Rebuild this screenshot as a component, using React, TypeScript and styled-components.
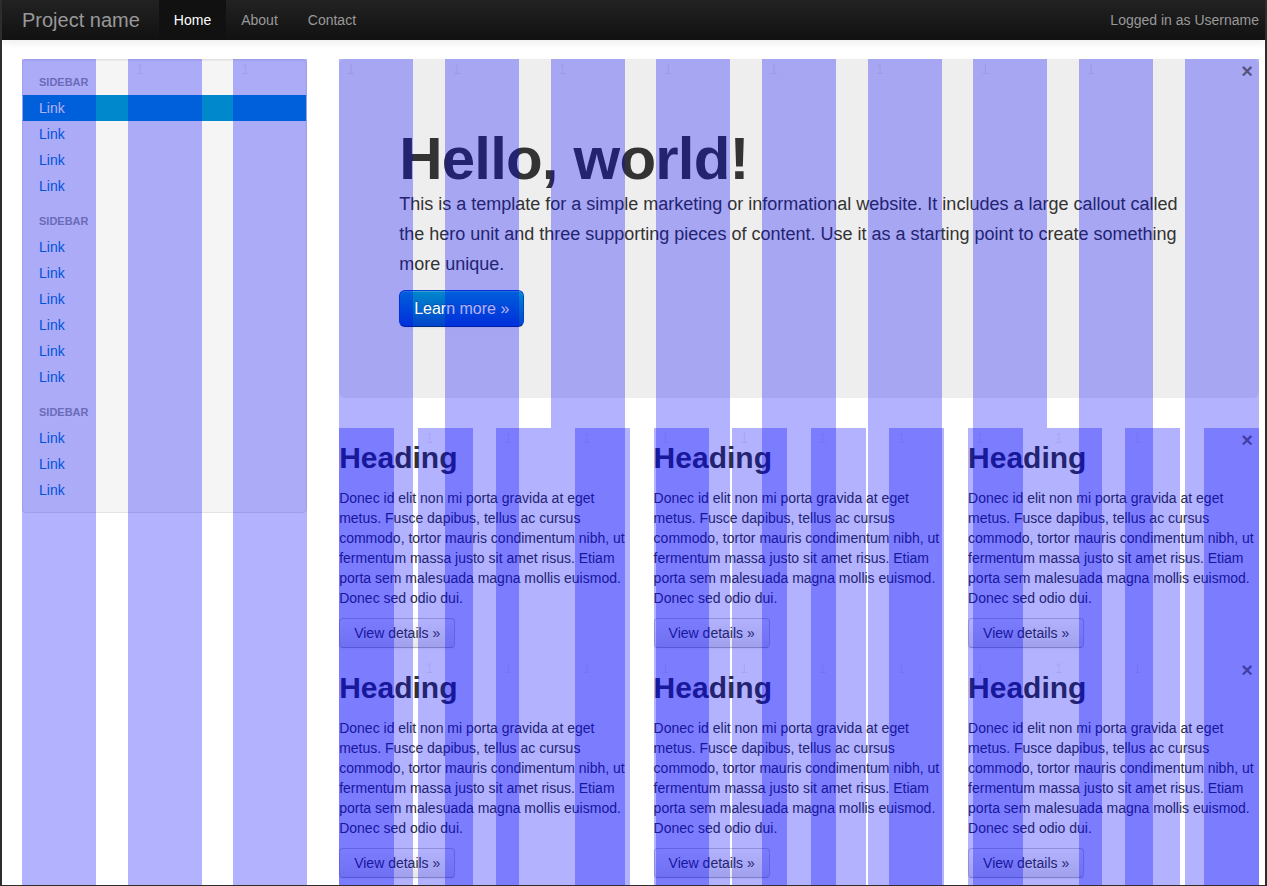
import React from 'react';
import styled, { createGlobalStyle } from 'styled-components';

const COL = '5.982906%';
const GUTTER = '2.564103%';

const GlobalStyle = createGlobalStyle`
  html, body {
    margin: 0;
    padding: 0;
    background: #fff;
  }
  body {
    font-family: "Liberation Sans", Arial, Helvetica, sans-serif;
    font-size: 14px;
    line-height: 20px;
    color: #333;
  }
`;

const Frame = styled.div`
  box-sizing: border-box;
  height: 100vh;
  overflow: hidden;
  border-left: 2px solid #2d2d2d;
  border-right: 2px solid #2d2d2d;
  border-bottom: 1px solid #2d2d2d;
`;

const Navbar = styled.div`
  position: relative;
  z-index: 3;
  height: 40px;
  background: linear-gradient(to bottom, #222222, #111111);
  box-shadow: 0 1px 10px rgba(0, 0, 0, 0.1);
`;

const NavInner = styled.div`
  display: flex;
  height: 40px;
  padding: 0 6px 0 20px;
`;

const Brand = styled.a`
  display: block;
  margin-left: -20px;
  padding: 10px 19px 10px 20px;
  font-size: 20px;
  font-weight: 200;
  line-height: 20px;
  color: #999;
  text-decoration: none;
`;

const NavLink = styled.a<{ $active?: boolean }>`
  display: block;
  padding: 10px 15px;
  font-size: 14px;
  line-height: 20px;
  text-decoration: none;
  color: ${p => (p.$active ? '#fff' : '#999')};
  background: ${p => (p.$active ? '#111' : 'transparent')};
`;

const NavText = styled.p`
  margin: 0 0 0 auto;
  line-height: 40px;
  color: #999;
`;

const Container = styled.div`
  padding: 19px 6px 0 20px;
`;

const OuterRow = styled.div`
  position: relative;
  display: flex;
  align-items: flex-start;
`;

const Sidebar = styled.div`
  box-sizing: border-box;
  width: 23.076923%;
  flex: none;
`;

const Well = styled.div`
  padding: 9px 0;
  background: #f5f5f5;
  border: 1px solid #e3e3e3;
  border-radius: 4px;
  box-shadow: inset 0 1px 1px rgba(0, 0, 0, 0.05);
`;

const NavList = styled.ul`
  list-style: none;
  margin: 0;
  padding: 0;
`;

const NavHeader = styled.li`
  padding: 3px 16px;
  font-size: 11px;
  font-weight: bold;
  line-height: 20px;
  color: #999;
  text-transform: uppercase;
  text-shadow: 0 1px 0 rgba(255, 255, 255, 0.5);

  &:not(:first-child) {
    margin-top: 9px;
  }
`;

const NavItem = styled.a<{ $active?: boolean }>`
  display: block;
  padding: 3px 16px;
  font-size: 14px;
  line-height: 20px;
  text-decoration: none;
  color: ${p => (p.$active ? '#fff' : '#0077cc')};
  background: ${p => (p.$active ? '#0088cc' : 'transparent')};
  text-shadow: ${p => (p.$active ? '0 -1px 0 rgba(0, 0, 0, 0.2)' : 'none')};
`;

const Content = styled.div`
  width: 74.358974%;
  margin-left: ${GUTTER};
  flex: none;
`;

const Hero = styled.div`
  padding: 60px;
  margin-bottom: 30px;
  background: #eeeeee;
  border-radius: 6px;
`;

const HeroTitle = styled.h1`
  margin: 10px 0 0;
  font-size: 60px;
  line-height: 60px;
  font-weight: bold;
  letter-spacing: -0.8px;
  color: #333;
`;

const HeroText = styled.p`
  margin: 0 0 11px;
  font-size: 18px;
  font-weight: 200;
  line-height: 30px;
`;

const PrimaryButton = styled.a`
  display: inline-block;
  padding: 9px 14px;
  font-size: 16px;
  line-height: 17px;
  color: #fff;
  text-decoration: none;
  text-shadow: 0 -1px 0 rgba(0, 0, 0, 0.25);
  background: linear-gradient(to bottom, #0088cc, #0044cc);
  border: 1px solid;
  border-color: #0044cc #0044cc #002a80;
  border-radius: 6px;
  box-shadow: inset 0 1px 0 rgba(255, 255, 255, 0.2), 0 1px 2px rgba(0, 0, 0, 0.05);
`;

const Row = styled.div`
  position: relative;
  display: flex;
`;

const Card = styled.div`
  width: 31.623932%;
  flex: none;

  & + & {
    margin-left: ${GUTTER};
  }
`;

const CardTitle = styled.h2`
  margin: 10px 0;
  font-size: 30px;
  line-height: 40px;
  font-weight: bold;
  color: #333;
`;

const Para = styled.p`
  margin: 0 0 10px;
`;

const DefaultButton = styled.a`
  display: inline-block;
  padding: 4px 14px;
  font-size: 14px;
  line-height: 20px;
  color: #333;
  text-decoration: none;
  text-shadow: 0 1px 1px rgba(255, 255, 255, 0.75);
  background: linear-gradient(to bottom, #ffffff, #e6e6e6);
  border: 1px solid #cccccc;
  border-bottom-color: #b3b3b3;
  border-radius: 4px;
  box-shadow: inset 0 1px 0 rgba(255, 255, 255, 0.2), 0 1px 2px rgba(0, 0, 0, 0.05);
`;

/* grid overlay laid over each fluid row */
const Overlay = styled.div`
  position: absolute;
  inset: 0;
  z-index: 1;
  display: flex;
  pointer-events: none;
`;

const OverlayCol = styled.div`
  box-sizing: border-box;
  width: ${COL};
  flex: none;
  padding-left: 8px;
  font-size: 14px;
  line-height: 20px;
  color: rgba(0, 0, 0, 0.07);
  background: rgba(0, 0, 255, 0.3);

  & + & {
    margin-left: ${GUTTER};
  }
`;

const Close = styled.span`
  position: absolute;
  top: 2px;
  right: 6px;
  font-size: 20px;
  font-weight: bold;
  line-height: 20px;
  color: rgba(0, 0, 0, 0.5);
`;

const GridOverlay = () => (
  <Overlay>
    {Array.from({ length: 12 }).map((_, i) => (
      <OverlayCol key={i}>{i > 0 && i < 11 ? '1' : ''}</OverlayCol>
    ))}
    <Close>×</Close>
  </Overlay>
);

const blurb =
  'Donec id elit non mi porta gravida at eget metus. Fusce dapibus, tellus ac cursus commodo, tortor mauris condimentum nibh, ut fermentum massa justo sit amet risus. Etiam porta sem malesuada magna mollis euismod. Donec sed odio dui.';

const sections = [4, 6, 3];

const CardRow = () => (
  <Row>
    {[0, 1, 2].map(i => (
      <Card key={i}>
        <CardTitle>Heading</CardTitle>
        <Para>{blurb}</Para>
        <Para>
          <DefaultButton href="#">View details »</DefaultButton>
        </Para>
      </Card>
    ))}
    <GridOverlay />
  </Row>
);

export default function App() {
  return (
    <>
      <GlobalStyle />
      <Frame>
        <Navbar>
          <NavInner>
            <Brand href="#">Project name</Brand>
            <NavLink href="#" $active>
              Home
            </NavLink>
            <NavLink href="#">About</NavLink>
            <NavLink href="#">Contact</NavLink>
            <NavText>Logged in as Username</NavText>
          </NavInner>
        </Navbar>

        <Container>
          <OuterRow>
            <Sidebar>
              <Well>
                <NavList>
                  {sections.map((count, s) => (
                    <React.Fragment key={s}>
                      <NavHeader>Sidebar</NavHeader>
                      {Array.from({ length: count }).map((_, i) => (
                        <li key={i}>
                          <NavItem href="#" $active={s === 0 && i === 0}>
                            Link
                          </NavItem>
                        </li>
                      ))}
                    </React.Fragment>
                  ))}
                </NavList>
              </Well>
            </Sidebar>

            <Content>
              <Hero>
                <HeroTitle>Hello, world!</HeroTitle>
                <HeroText>
                  This is a template for a simple marketing or informational website. It includes a
                  large callout called the hero unit and three supporting pieces of content. Use it
                  as a starting point to create something more unique.
                </HeroText>
                <HeroText>
                  <PrimaryButton href="#">Learn more »</PrimaryButton>
                </HeroText>
              </Hero>
              <CardRow />
              <CardRow />
            </Content>

            <GridOverlay />
          </OuterRow>
        </Container>
      </Frame>
    </>
  );
}
